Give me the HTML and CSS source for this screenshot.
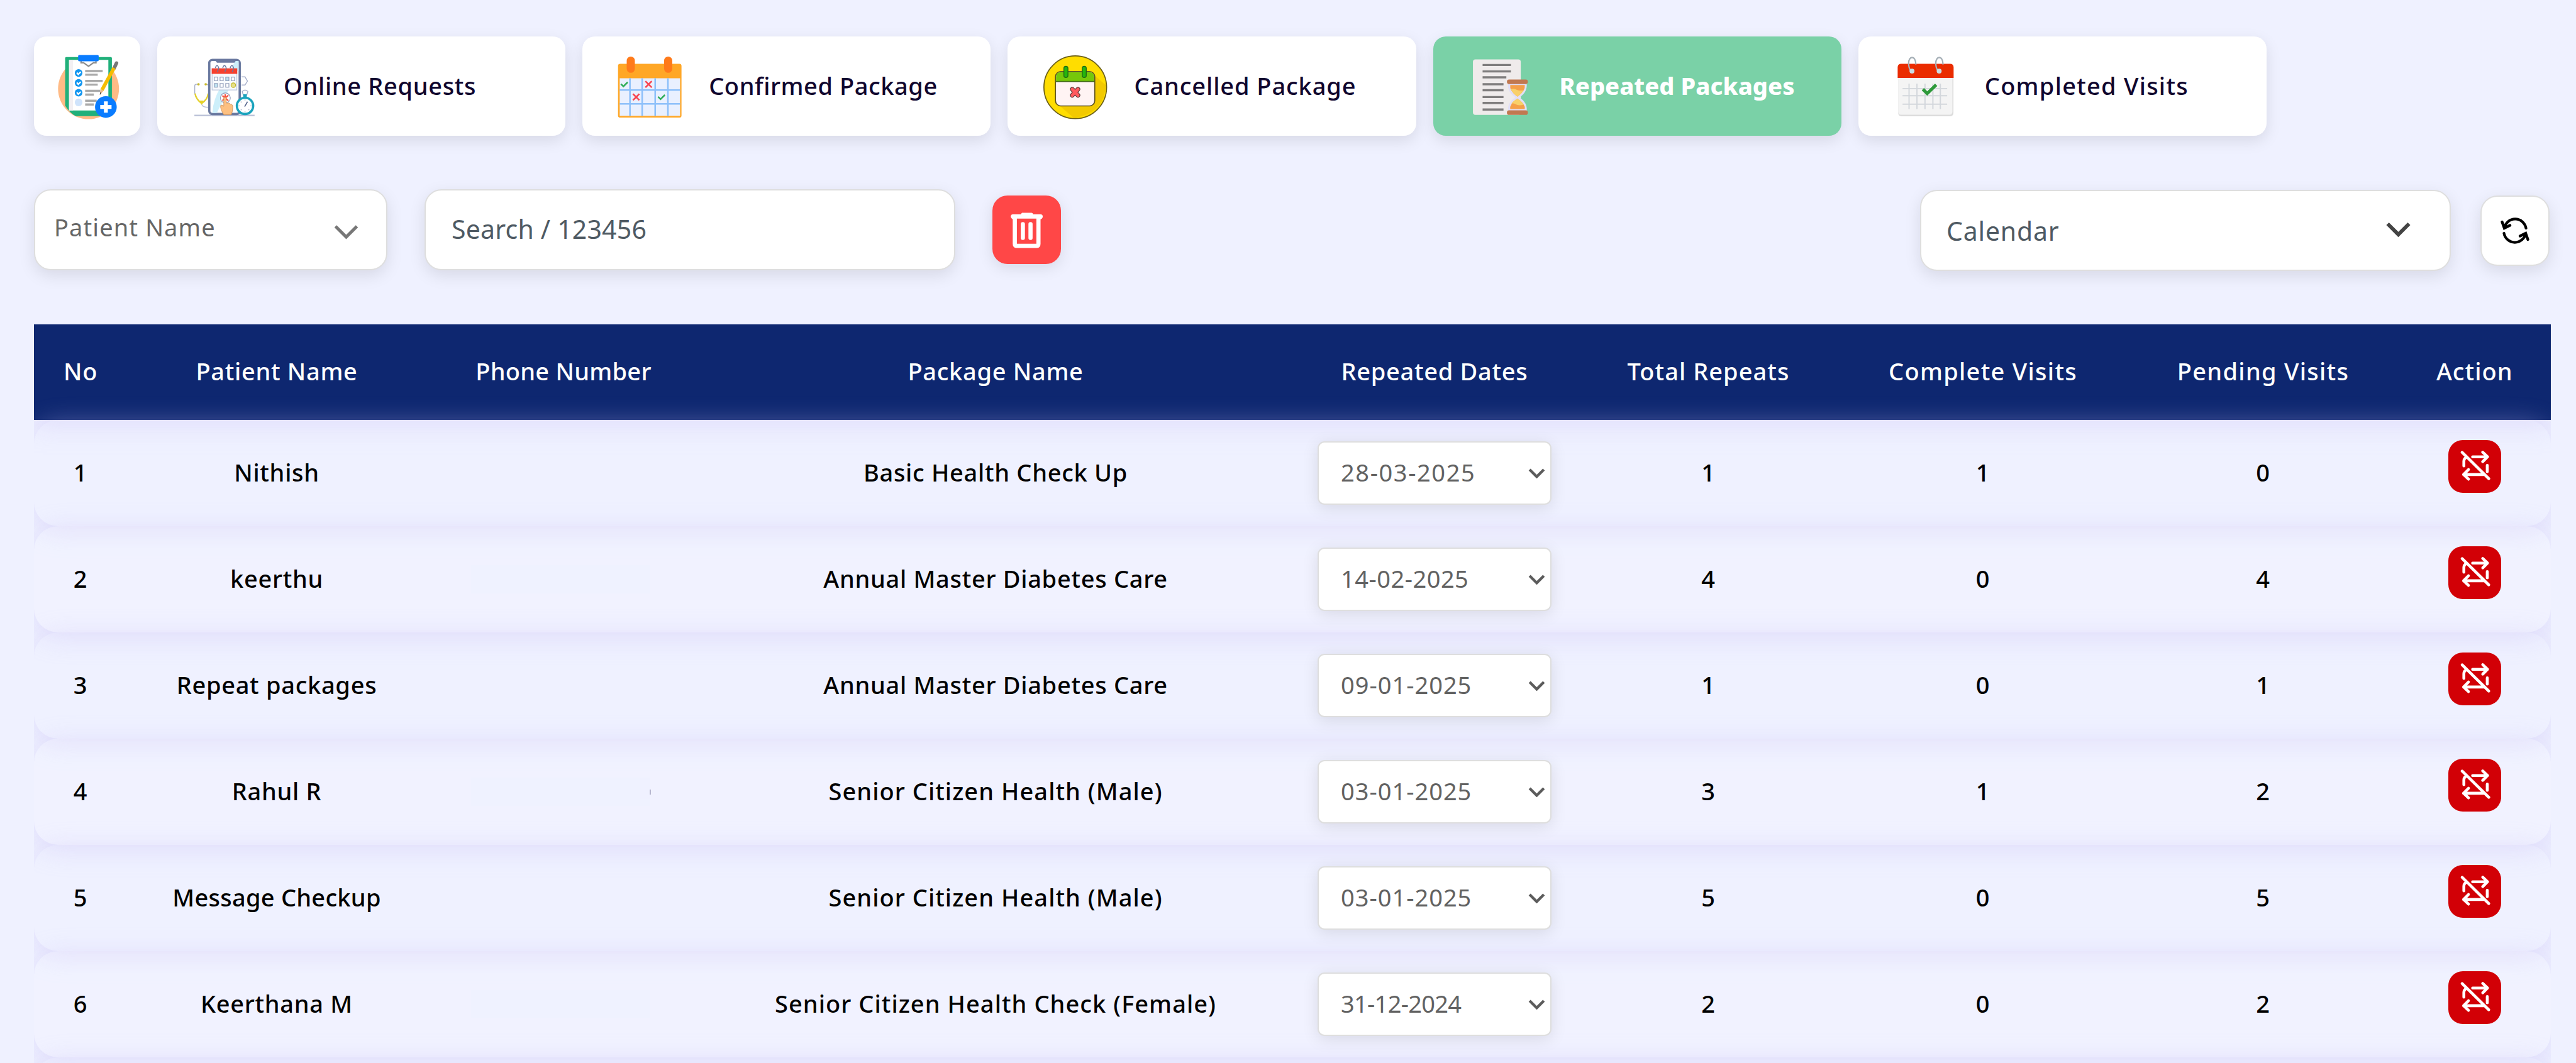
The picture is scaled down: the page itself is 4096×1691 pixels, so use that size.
FILE: index.html
```html
<!DOCTYPE html>
<html lang="en">
<head>
<meta charset="utf-8">
<title>Repeated Packages</title>
<link rel="stylesheet" href="styles.css">
</head>
<body>
<svg class="sprite" aria-hidden="true">
  <symbol id="chev" viewBox="0 0 40 24"><path d="M3 3L20 20L37 3"/></symbol>
  <symbol id="norepeat" viewBox="0 0 84 84"><path d="M22 19.7L64.3 61.4M38.6 26.7H62.3M54.7 19.4L62.3 26.7L54.7 34.4M57.6 54.9H24.3M32 47L24.3 54.9L32 62.2M24.7 41.3V34Q24.7 29 29.5 27.2M61.9 40.4V50.2"/></symbol>
</svg>

<nav class="tabs">
  <a class="tab tab-icon">
    <svg class="pic" viewBox="151 149 190 190">
      <circle cx="250" cy="250.5" r="86" fill="#ffbb86"/>
      <path d="M187 161H313Q316 161 316 164V328H214Q196 318 184 298V164Q184 161 187 161Z" fill="#20b07a"/>
      <path d="M195 169H306V312H195Z" fill="#fff"/><path d="M195 169H206V312H195Z" fill="#f3f0f3"/>
      <path d="M229 172V177H236L250 187L264 177H271V172" fill="none" stroke="#8d8d8d" stroke-width="4"/>
      <rect x="220.7" y="155" width="58" height="18" rx="3" fill="#0a7cff"/>
      <g fill="#1296f0"><circle cx="222" cy="206" r="10.8"/><circle cx="222" cy="234" r="10.8"/><circle cx="222" cy="261.7" r="10.8"/><circle cx="222" cy="289" r="10.8" fill="#cfe3fb"/></g>
      <path d="M217 205L221 210L228 203M217 233L221 238L228 231M217 261L221 266L228 259" fill="none" stroke="#fff" stroke-width="4"/>
      <path d="M240.5 200.5H290M240.5 211H276M240.5 228.5H290M240.5 239H276M240.5 256.5H283M240.5 267H265M240.5 284.5H273M240.5 295H265" stroke="#a9a9a9" stroke-width="6"/>
      <path d="M329 178L322 193" stroke="#777" stroke-width="10" stroke-linecap="round"/>
      <path d="M322 192L288 254" stroke="#f5bd00" stroke-width="10"/>
      <path d="M283.600 251.600L292.400 256.400L282 268Z" fill="#e8b98a"/><path d="M283 260L286 263L282 268Z" fill="#444"/>
      <circle cx="299" cy="302" r="30.600" fill="#0a7cff"/><path d="M299 286V318M283 302H315" stroke="#fff" stroke-width="11"/>
    </svg>
  </a>
  <a class="tab">
    <svg class="pic" viewBox="540 149 190 190">
      <path d="M549 326H719" stroke="#b8bfd6" stroke-width="4"/>
      <path d="M559 238H553Q550 238 550 244V262Q552 280 569.600 290Q587 280 589 262V244Q589 238 584 238" fill="none" stroke="#a9b2cc" stroke-width="2.500"/>
      <path d="M551 264Q554 281 569.600 292Q586 281 588 264" fill="none" stroke="#e6d22a" stroke-width="4"/>
      <path d="M564 284H575L569.600 297Z" fill="#e6d22a"/><path d="M570 295Q572 303 590 303" fill="none" stroke="#b8bfd6" stroke-width="2.500"/>
      <circle cx="560.600" cy="238" r="3.500" fill="#c9b92a"/><circle cx="581" cy="238" r="3.500" fill="#c9b92a"/>
      <path d="M682 217H692L699 229L692 240H682" fill="#fff" stroke="#a9b2cc" stroke-width="2.500"/>
      <rect x="591" y="169" width="86" height="153" rx="9" fill="#fff" stroke="#6b7aa0" stroke-width="6.500"/>
      <path d="M664 172H674V200H650ZM602 300Q610 260 632 236H655L612 319H600Z" fill="#cdeffa"/>
      <path d="M610 168H665V172Q665 177 659 177H616Q610 177 610 172Z" fill="#6b7aa0"/>
      <rect x="599" y="194" width="70" height="60" fill="#f7fafd" stroke="#b8c3da" stroke-width="2"/>
      <path d="M598 193H670V208.500H598Z" fill="#f6412e"/>
      <path d="M608 192Q613 178 618 192L614 203M629 192Q634 178 639 192L635 203M650 192Q655 178 660 192L656 203" fill="none" stroke="#6b7aa0" stroke-width="2.500"/>
      <g fill="#fff" stroke="#8f9bb8" stroke-width="2"><path d="M605.500 217.500H614.500V228H605.500ZM621.500 217.500H630.500V228H621.500ZM653.500 217.500H662.500V228H653.500ZM621.500 235.500H630.500V246H621.500ZM637.500 235.500H646.500V246H637.500Z"/><path d="M637.500 217.500H646.500V228H637.500ZM605.500 235.500H614.500V246H605.500Z" fill="#bfe3f2"/><circle cx="659" cy="240.500" r="6.500" fill="#e6e08a" stroke="#c2b82a"/></g>
      <circle cx="636.500" cy="276.500" r="14" fill="#fff" stroke="#8f9bb8" stroke-width="2"/>
      <path d="M636 266V284M628 270L645 284M645 269L628 284" stroke="#f6513e" stroke-width="4"/>
      <path d="M632 276Q636 272 639 277V291Q648 289 651 294Q658 294 657.500 303Q657 316 653 324H632Q622 308 623 298Q626 294 632 300Z" fill="#fdc081" stroke="#c98f5c" stroke-width="1.500"/>
      <path d="M684 258Q692 250 700 258L697 268H687Z" fill="#fff" stroke="#a9b2cc" stroke-width="2.500"/><path d="M687 266H697V276H687Z" fill="#1ba3bd"/>
      <circle cx="692" cy="299" r="23" fill="#fff" stroke="#1ba3bd" stroke-width="6.500"/>
      <path d="M691 301L699 287" stroke="#5b6a90" stroke-width="3"/><path d="M692 281V284M692 314V317M674 299H677M707 299H710M680 287L682 289M680 311L682 309M704 311L702 309" stroke="#8f9bb8" stroke-width="2"/>
    </svg>
    <span>Online Requests</span>
  </a>
  <a class="tab tab-b">
    <svg class="pic" viewBox="1740 149 190 190">
      <rect x="1744.800" y="180" width="179.200" height="152" rx="6" fill="#ffa726"/>
      <path d="M1749.500 221H1920V327H1749.500Z" fill="#e9f0ff"/>
      <path d="M1778.500 221V327M1813 221V327M1849.700 221V327M1885.700 221V327M1749.500 254.300H1920M1749.500 293.300H1920" stroke="#8dc0fa" stroke-width="4.500"/>
      <path d="M1780.800 171V194M1886.400 171V194" stroke="#ff7a1a" stroke-width="23" stroke-linecap="round"/>
      <path d="M1753 237L1760 244L1772 232M1858 273L1865 280L1877 268" fill="none" stroke="#2fae5a" stroke-width="4.500"/>
      <path d="M1822 229L1840 247M1840 229L1822 247M1787 265L1805 283M1805 265L1787 283" stroke="#f8434f" stroke-width="4.500"/>
    </svg>
    <span>Confirmed Package</span>
  </a>
  <a class="tab tab-c">
    <svg class="pic" viewBox="2939 149 190 190">
      <circle cx="3034.400" cy="246.300" r="88.500" fill="#ffdd00" stroke="#6b5f18" stroke-width="3"/>
      <path d="M3088 212L3120 240Q3118 320 3030 333L2990 298Z" fill="#f2c900"/>
      <rect x="2978.500" y="202" width="111" height="97" rx="15" fill="#fff4f4" stroke="#5f5420" stroke-width="3"/>
      <path d="M2980 229V218Q2980 203.500 2994 203.500H3074Q3088 203.500 3088 218V229Z" fill="#76c80a"/><path d="M2979 230H3089" stroke="#3f6b12" stroke-width="3"/>
      <g stroke-linecap="round"><path d="M3008 193V213M3059.800 193V213" stroke="#1f6b12" stroke-width="14"/><path d="M3008 193V213M3059.800 193V213" stroke="#25b50d" stroke-width="9"/>
      <path d="M3026 252L3042 269M3042 252L3026 269" stroke="#5e3b3b" stroke-width="13"/><path d="M3026 252L3042 269M3042 252L3026 269" stroke="#ff5a5f" stroke-width="9"/></g>
    </svg>
    <span>Cancelled Package</span>
  </a>
  <a class="tab tab-active">
    <svg class="pic" viewBox="4140.600 149 190 190">
      <rect x="4156.700" y="167.700" width="135" height="156.600" rx="7" fill="#efebeb"/>
      <path d="M4184 183.300H4264M4184 201.700H4264M4184 218.300H4251M4184 237.700H4243M4184 254.700H4243M4184 274H4243M4184 290.700H4243M4184 309.300H4243" stroke="#7f7d7d" stroke-width="6"/>
      <path d="M4256 236Q4253 260 4277 275Q4253 290 4256 313H4308.500Q4311 290 4288 275Q4311 260 4308.500 236Z" fill="#e2dff6"/>
      <path d="M4262 240H4303Q4306 256 4282.300 273Q4259 256 4262 240ZM4262 308H4303Q4306 294 4282.300 278Q4259 294 4262 308Z" fill="#f59f49"/>
      <path d="M4264 252Q4272 249 4282 254Q4292 257 4300 254Q4295 264 4282.300 273Q4268 263 4264 252ZM4265 292Q4270 285 4282.300 278Q4294 285 4300 295Q4290 299 4281 296Q4272 290 4265 292Z" fill="#f9d069"/>
      <rect x="4252.700" y="224.300" width="59" height="13" rx="6" fill="#c17850"/><rect x="4252.700" y="311.500" width="59" height="13" rx="6" fill="#c17850"/>
    </svg>
    <span>Repeated Packages</span>
  </a>
  <a class="tab tab-d">
    <svg class="pic" viewBox="5339.600 149 190 190">
      <rect x="5356" y="200" width="156" height="128.500" rx="9" fill="#dcdcdc"/><rect x="5356" y="200" width="153" height="124" rx="8" fill="#f4f4f4"/>
      <path d="M5354.500 220V190Q5354.500 180 5364.500 180H5502.500Q5512.500 180 5512.500 190V220Z" fill="#ea2c00"/>
      <path d="M5386.700 236V308M5409 236V308M5431.700 236V308M5454 236V308M5475 236V308M5368.300 250H5494.300M5368.300 270.300H5494.300M5368.300 294H5494.300" stroke="#d3d7dc" stroke-width="3.500"/>
      <path d="M5425.700 251.700L5438 264L5463.300 239.300" fill="none" stroke="#2e9a3a" stroke-width="9"/>
      <g fill="none" stroke="#a5afb6" stroke-width="4"><path d="M5406 182Q5405 162 5395 162Q5385 164 5385.500 180Q5386 192 5391 199M5482.700 182Q5481.700 162 5471.700 162Q5461.700 164 5462.200 180Q5462.700 192 5467.700 199"/></g>
      <circle cx="5395" cy="200.700" r="7" fill="#c9dde4"/><circle cx="5471.700" cy="200.700" r="7" fill="#c9dde4"/>
    </svg>
    <span>Completed Visits</span>
  </a>
</nav>

<section class="filters">
  <div class="field patient"><span>Patient Name</span><svg class="chev"><use href="#chev"/></svg></div>
  <div class="field search"><span>Search / 123456</span></div>
  <div class="trash"><svg viewBox="0 0 109 109"><path fill="#fff" fill-rule="evenodd" d="M47 27.500H62Q64.300 27.500 65 30.500H76.500Q79.800 32.500 79.800 33.500Q79.500 37 76.500 38V77Q76.500 83.600 70 83.600H39Q32.300 83.600 32.300 77V38Q29.500 36 29.500 33.500Q29.500 31 33 30.500H44.500ZM38.900 36.400V76.800H69.900V36.400Z"/><path d="M32.500 33.200H76.700" stroke="#fff" stroke-width="6.400" stroke-linecap="round"/><path d="M48.400 45.500V67.500M60.600 45.500V67.500" stroke="#fff" stroke-width="6.600" stroke-linecap="round"/></svg></div>
  <div class="field calendar"><span>Calendar</span><svg class="chev"><use href="#chev"/></svg></div>
  <div class="field refresh"><svg viewBox="0 0 46 42"><path d="M2.500 7L6 17L15 12.500M6 17A17.500 17.500 0 0 1 40.500 17M43.500 35L40 25L31 29.500M40 25A17.500 17.500 0 0 1 5.500 25"/></svg></div>
</section>

<section class="table">
  <div class="row head"><span>No</span><span>Patient Name</span><span class="tight">Phone Number</span><span>Package Name</span><span>Repeated Dates</span><span class="wide">Total Repeats</span><span class="wider">Complete Visits</span><span class="wider">Pending Visits</span><span class="wide">Action</span></div>
  <div class="row"><span>1</span><span>Nithish</span><span></span><span>Basic Health Check Up</span><div class="date">28-03-2025<svg><use href="#chev"/></svg></div><span>1</span><span>1</span><span>0</span><div class="action"><svg><use href="#norepeat"/></svg></div></div>
  <div class="row"><span>2</span><span>keerthu</span><i class="blank"></i><span>Annual Master Diabetes Care</span><div class="date n1">14-02-2025<svg><use href="#chev"/></svg></div><span>4</span><span>0</span><span>4</span><div class="action"><svg><use href="#norepeat"/></svg></div></div>
  <div class="row"><span>3</span><span>Repeat packages</span><span></span><span>Annual Master Diabetes Care</span><div class="date n3">09-01-2025<svg><use href="#chev"/></svg></div><span>1</span><span>0</span><span>1</span><div class="action"><svg><use href="#norepeat"/></svg></div></div>
  <div class="row"><span>4</span><span>Rahul R</span><i class="blank mark"></i><span class="wide">Senior Citizen Health (Male)</span><div class="date n3">03-01-2025<svg><use href="#chev"/></svg></div><span>3</span><span>1</span><span>2</span><div class="action"><svg><use href="#norepeat"/></svg></div></div>
  <div class="row"><span>5</span><span class="tight">Message Checkup</span><span></span><span class="wide">Senior Citizen Health (Male)</span><div class="date n3">03-01-2025<svg><use href="#chev"/></svg></div><span>5</span><span>0</span><span>5</span><div class="action"><svg><use href="#norepeat"/></svg></div></div>
  <div class="row"><span>6</span><span>Keerthana M</span><i class="blank"></i><span class="wide">Senior Citizen Health Check (Female)</span><div class="date n2">31-12-2024<svg><use href="#chev"/></svg></div><span>2</span><span>0</span><span>2</span><div class="action"><svg><use href="#norepeat"/></svg></div></div>
  <div class="row"></div>
</section>
</body>
</html>
```
FILE: styles.css
```css
* { box-sizing: border-box; }
body {
  margin: 0;
  height: 1691px;
  overflow: hidden;
  padding: 58.3px 40.5px 0 54px;
  background: #eff1ff;
  font: 500 38px/1.3 "Noto Sans", sans-serif;
  color: #000;
}
.sprite { display: none; }
svg { display: block; flex: none; }

.tabs { display: flex; gap: 27px; }
.tab {
  display: flex;
  align-items: center;
  gap: 40px;
  width: 649.2px;
  height: 158px;
  padding-left: 54px;
  border-radius: 20px;
  background: #fff;
  box-shadow: 0 8px 24px rgba(0, 0, 0, .1);
  color: #10062e;
  letter-spacing: .67px;
  white-space: nowrap;
}
.tab span { margin-top: -2px; }
.tab-icon { width: 169px; padding: 0; justify-content: center; }
.tab-b { letter-spacing: .55px; }
.tab-c { letter-spacing: .9px; }
.tab-d { letter-spacing: 1.25px; }
.tab-active { background: #7ad1a7; color: #fff; font-weight: 800; letter-spacing: 0; }
.pic { width: 107px; height: 107px; }

.filters { display: flex; align-items: center; height: 129px; margin-top: 85px; }
.field {
  display: flex;
  align-items: center;
  justify-content: space-between;
  height: 129px;
  border: 2.500px solid #dedede;
  border-radius: 27px;
  background: #fff;
  box-shadow: 0 8px 26px rgba(0, 0, 0, .1);
  color: #4f5a63;
  font-size: 41px;
  font-weight: 400;
}
.chev { width: 41px; height: 24px; fill: none; stroke: #777; stroke-width: 5; }
.patient { width: 562px; padding: 0 43px 0 30px; color: #666; font-size: 38px; letter-spacing: 1.100px; }
.patient span { margin-top: -8px; }
.patient .chev { margin-top: 6px; }
.search { width: 844px; margin-left: 59px; padding-left: 41px; letter-spacing: .2px; }
.search span { margin-top: -2px; }
.trash {
  width: 109px;
  height: 109px;
  margin-left: 58.500px;
  border-radius: 24px;
  background: #ff4747;
  box-shadow: 0 6px 24px rgba(0, 0, 0, .1);
}
.calendar { width: 844px; margin-top: 2px; margin-left: auto; padding: 2px 61px 0 40px; letter-spacing: .8px; }
.calendar .chev { margin-top: -5px; stroke: #444; stroke-width: 6; }
.refresh { width: 110px; height: 112px; margin: 2px 1.500px 0 47px; justify-content: center; }
.refresh svg { width: 46px; height: 42px; fill: none; stroke: #000; stroke-width: 4.300; stroke-linecap: round; }

.table { margin-top: 85.500px; overflow: hidden; height: 1175px; }
.row {
  display: grid;
  grid-template-columns: 148px 476px 436px 938px 458px 413px 460px 431px 241.500px;
  align-items: center;
  justify-items: center;
  height: 169px;
  border-radius: 38px;
  box-shadow: 0 7px 40px rgba(203, 192, 246, .42);
  letter-spacing: .7px;
  white-space: nowrap;
}
.row > span { margin-top: -3px; }
.row:nth-child(odd) { background: rgba(255, 255, 255, .13); }
.row .tight { letter-spacing: .25px; }
.row .wide { letter-spacing: 1.050px; }
.row .wider { letter-spacing: 1.300px; }
.row.head { height: 152.700px; border-radius: 0; background: #0e2770; color: #fff; }
.date {
  display: flex;
  align-items: center;
  justify-content: space-between;
  width: 372px;
  height: 101px;
  padding: 0 8px 2px 35px;
  border: 2.500px solid #dedede;
  border-radius: 11px;
  background: #fff;
  box-shadow: 0 5px 26px rgba(0, 0, 0, .1);
  color: #626262;
  font-weight: 400;
  letter-spacing: 1.600px;
}
.date svg { width: 27px; height: 16px; margin-top: 2px; fill: none; stroke: #5c5c5c; stroke-width: 6.500; }
.date.n1 { letter-spacing: .500px; }
.date.n2 { letter-spacing: -.700px; }
.date.n3 { letter-spacing: 1px; }
.action { width: 84px; height: 84px; margin-top: -22px; border-radius: 23px; background: #d20006; }
.action svg { width: 84px; height: 84px; fill: none; stroke: #fff; stroke-width: 4.600; stroke-linecap: round; stroke-linejoin: round; }
.blank { width: 284px; height: 45px; margin-right: 10px; background: #eff1ff; opacity: .8; }
.mark { display: flex; justify-content: flex-end; align-items: center; }
.mark::after { content: ""; width: 2px; height: 8px; margin-right: -2px; background: #a9a9c4; }
```
